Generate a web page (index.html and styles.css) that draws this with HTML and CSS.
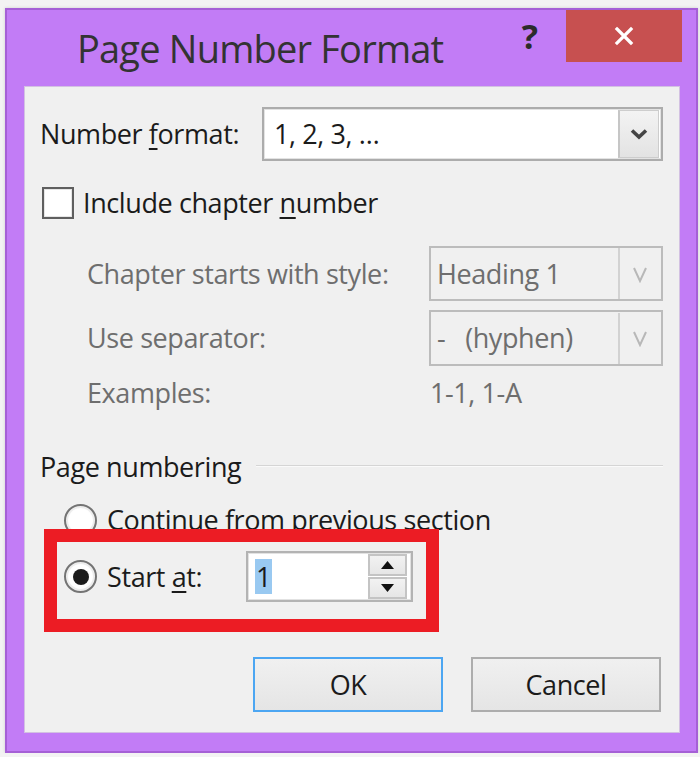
FILE: index.html
```html
<!DOCTYPE html>
<html lang="en">
<head>
<meta charset="utf-8">
<title>Page Number Format</title>
<link rel="stylesheet" href="styles.css">
</head>
<body>
<div class="window">
  <div class="titlebar">
    <div class="title">Page Number Format</div>
    <div class="help">?</div>
    <div class="close">
      <svg width="116" height="52" viewBox="0 0 116 52"><path d="M51 19 L65 33 M65 19 L51 33" stroke="#fff" stroke-width="3.2" stroke-linecap="square" fill="none"/></svg>
    </div>
  </div>

  <div class="panel">
    <div class="format-row">
      <span class="label">Number <u>f</u>ormat:</span>
      <div class="select">
        <span class="select-value">1, 2, 3, …</span>
        <span class="select-btn">
          <svg width="18" height="12" viewBox="0 0 18 12"><path d="M2 2.5 L9 9 L16 2.5" stroke="#454545" stroke-width="3.6" fill="none"/></svg>
        </span>
      </div>
    </div>

    <div class="check-row">
      <span class="checkbox"></span>
      <span class="label">Include chapter <u>n</u>umber</span>
    </div>

    <div class="sub-row sub-row-select">
      <span class="dim">Chapter starts with style:</span>
      <div class="select select-disabled">
        <span class="select-value">Heading 1</span>
        <span class="select-btn">
          <svg width="18" height="18" viewBox="0 0 18 18"><path d="M3 3 L9 16 L15 3" stroke="#b8b8b8" stroke-width="2" fill="none"/></svg>
        </span>
      </div>
    </div>

    <div class="sub-row sub-row-select sub-row-sep">
      <span class="dim">Use separator:</span>
      <div class="select select-disabled">
        <span class="select-value">-&nbsp;&nbsp;&nbsp;(hyphen)</span>
        <span class="select-btn">
          <svg width="18" height="18" viewBox="0 0 18 18"><path d="M3 3 L9 16 L15 3" stroke="#b8b8b8" stroke-width="2" fill="none"/></svg>
        </span>
      </div>
    </div>

    <div class="sub-row examples-row">
      <span class="dim">Examples:</span>
      <span class="dim example-value">1-1, 1-A</span>
    </div>

    <div class="group-head">
      <span class="label">Page numbering</span>
      <span class="group-line"></span>
    </div>

    <div class="radio-row continue-row">
      <span class="radio"></span>
      <span class="label">Continue from previous section</span>
    </div>

    <div class="radio-row start-row">
      <span class="radio radio-checked"></span>
      <span class="label start-label">Start <u>a</u>t:</span>
      <div class="spinner">
        <span class="spinner-value"><span class="selection">1</span></span>
        <span class="spin-btns">
          <span class="spin-btn"><svg width="13" height="8" viewBox="0 0 13 8"><path d="M0 8 L6.5 0 L13 8 Z" fill="#111"/></svg></span>
          <span class="spin-btn"><svg width="13" height="8" viewBox="0 0 13 8"><path d="M0 0 L6.5 8 L13 0 Z" fill="#111"/></svg></span>
        </span>
      </div>
    </div>

    <div class="buttons">
      <button class="btn btn-default">OK</button>
      <button class="btn">Cancel</button>
    </div>

    <div class="callout"></div>
  </div>
</div>
</body>
</html>
```

FILE: styles.css
```css
* {
  box-sizing: border-box;
}

html, body {
  margin: 0;
  padding: 0;
  background: #f3f3f3;
}

body {
  font-family: "Open Sans", "Noto Sans", sans-serif;
  font-size: 27px;
  letter-spacing: -0.4px;
  color: #1b1b1b;
}

u {
  text-decoration-thickness: 2px;
  text-underline-offset: 4px;
}

/* window frame */
.window {
  margin: 8px 0 0 5px;
  width: 693px;
  height: 745px;
  background: #c27cf6;
  border: 2px solid #a560d6;
  display: flex;
  flex-direction: column;
  padding: 0 16px 18px 17px;
  box-shadow: 0 0 3px rgba(0, 0, 0, 0.15);
}

.titlebar {
  height: 76px;
  display: flex;
  align-items: flex-start;
  margin-right: -2px;
  margin-left: -17px;
  padding-left: 70px;
}

.title {
  flex: 1;
  padding-top: 19px;
  font-size: 38px;
  line-height: 38px;
  letter-spacing: -0.8px;
  color: #333;
}

.help {
  margin-top: 9px;
  margin-right: 28px;
  font-size: 34px;
  line-height: 34px;
  font-weight: 700;
  color: #2b2b2b;
  letter-spacing: 0;
}

.close {
  width: 116px;
  height: 52px;
  background: #c75050;
  display: flex;
}

/* client area */
.panel {
  flex: 1;
  position: relative;
  background: #f0f0f0;
  border: 1px solid #d3c1e2;
  padding: 0 16px 0 15px;
  display: flex;
  flex-direction: column;
}

.label {
  line-height: 36px;
  white-space: nowrap;
}

.dim {
  color: #6e6e6e;
  line-height: 36px;
  white-space: nowrap;
}

/* combo boxes */
.format-row {
  margin-top: 20px;
  display: grid;
  grid-template-columns: 222px 1fr;
  align-items: center;
}

.select {
  height: 54px;
  background: #fff;
  border: 2px solid #acacac;
  box-shadow: inset 0 0 0 1px #e3e3e3;
  display: flex;
  align-items: center;
  padding: 0 2px 0 10px;
}

.select-value {
  flex: 1;
  line-height: 36px;
  white-space: nowrap;
}

.select-btn {
  width: 41px;
  height: 48px;
  background: linear-gradient(#f3f3f3, #e3e3e3);
  border: 1px solid #cdcdcd;
  border-left: 2px solid #c6c6c6;
  display: flex;
  align-items: center;
  justify-content: center;
}

.select-disabled {
  height: 55px;
  background: #f0f0f0;
  border-color: #bcbcbc;
  box-shadow: none;
  padding-left: 6px;
  color: #6e6e6e;
}

.select-disabled .select-btn {
  background: #f0f0f0;
  border: none;
  border-left: 2px solid #d2d2d2;
  height: 51px;
}

/* check box */
.check-row {
  margin-top: 26px;
  height: 32px;
  display: flex;
  align-items: center;
  gap: 9px;
  padding-left: 2px;
}

.checkbox {
  width: 32px;
  height: 32px;
  background: #fff;
  border: 2px solid #5f5f5f;
  box-shadow: inset 0 0 0 1px #e6e6e6;
}

/* chapter sub options */
.sub-row {
  display: grid;
  grid-template-columns: 342px 234px;
  align-items: center;
  padding-left: 47px;
}

.sub-row-select {
  margin-top: 27px;
}

.sub-row-sep {
  margin-top: 9px;
}

.sub-row-sep .select-disabled {
  height: 56px;
}

.examples-row {
  margin-top: 9px;
  height: 36px;
}

.example-value {
  padding-left: 1px;
}

/* group heading */
.group-head {
  margin-top: 38px;
  height: 36px;
  display: flex;
}

.group-line {
  flex: 1;
  margin: 16px 0 0 15px;
  height: 2px;
  border-top: 1px solid #d5d5d5;
  border-bottom: 1px solid #fafafa;
}

/* radio buttons */
.radio-row {
  display: flex;
  align-items: center;
  padding-left: 24px;
}

.continue-row {
  margin-top: 17px;
  height: 36px;
  gap: 10px;
}

.start-row {
  margin-top: 13px;
  height: 51px;
  gap: 10px;
}

.radio {
  width: 33px;
  height: 33px;
  border-radius: 50%;
  border: 2px solid #747474;
  background: radial-gradient(circle, #ffffff 55%, #f1f1f1 100%);
  box-shadow: inset 0 0 0 2px #ededed;
  display: flex;
  align-items: center;
  justify-content: center;
  flex: none;
}

.radio-checked::after {
  content: "";
  width: 16px;
  height: 16px;
  border-radius: 50%;
  background: #1c1c1c;
}

.start-label {
  width: 129px;
}

/* spin box */
.spinner {
  width: 167px;
  height: 51px;
  background: #fff;
  border: 2px solid #b3b3b3;
  box-shadow: inset 0 0 0 1px #e2e2e2;
  display: flex;
  align-items: center;
  padding: 0 4px 0 7px;
}

.spinner-value {
  flex: 1;
  display: flex;
  align-items: center;
}

.selection {
  background: #99c9f1;
  line-height: 35px;
  padding: 0 1px;
}

.spin-btns {
  width: 39px;
  height: 45px;
  display: flex;
  flex-direction: column;
  gap: 1px;
}

.spin-btn {
  flex: 1;
  background: linear-gradient(#f2f2f2, #e6e6e6);
  border: 2px solid #c4c4c4;
  display: flex;
  align-items: center;
  justify-content: center;
}

/* dialog buttons */
.buttons {
  margin-top: 55px;
  display: flex;
  justify-content: flex-end;
  gap: 28px;
  padding-right: 2px;
}

.btn {
  width: 190px;
  height: 55px;
  font-family: inherit;
  font-size: 27px;
  letter-spacing: -0.4px;
  color: #1b1b1b;
  background: linear-gradient(#f0f0f0, #e5e5e5);
  border: 2px solid #adadad;
  padding: 0;
}

.btn-default {
  border-color: #4ca6f2;
}

/* highlight frame drawn over the start-at option */
.callout {
  position: absolute;
  left: 19px;
  top: 442px;
  width: 395px;
  height: 103px;
  border: 13px solid #ec1c24;
  pointer-events: none;
}
```
